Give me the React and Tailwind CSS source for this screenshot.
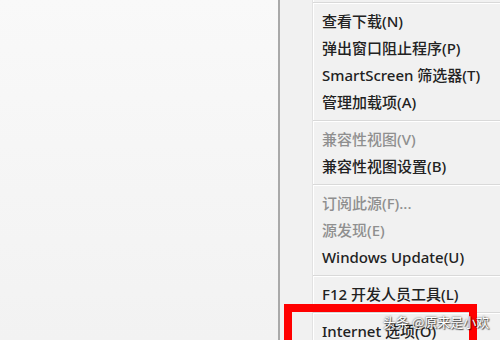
import React from "react";

const items = [
  { type: "sep", top: true },
  { label: "查看下载(N)" },
  { label: "弹出窗口阻止程序(P)" },
  { label: "SmartScreen 筛选器(T)" },
  { label: "管理加载项(A)" },
  { type: "sep" },
  { label: "兼容性视图(V)", disabled: true },
  { label: "兼容性视图设置(B)" },
  { type: "sep" },
  { label: "订阅此源(F)...", disabled: true },
  { label: "源发现(E)", disabled: true },
  { label: "Windows Update(U)" },
  { type: "sep" },
  { label: "F12 开发人员工具(L)" },
  { type: "sep" },
  { label: "Internet 选项(O)" },
];

const MenuRow = ({ item }) => {
  if (item.type === "sep") {
    return (
      <div className={`flex ${item.top ? "h-[8px] pt-[2px]" : "h-[10px] pt-[4px]"}`}>
        <div className="w-[33px] shrink-0" />
        <div className="flex-1 flex flex-col">
          <div className="h-px bg-[#d9d9d9]" />
          <div className="h-px bg-white" />
        </div>
      </div>
    );
  }
  return (
    <div className="flex h-[27px] items-center">
      <div className="w-[33px] shrink-0" />
      <span
        className={`pl-[9px] text-[15px] font-medium whitespace-nowrap leading-none ${
          item.disabled ? "text-[#8f8f8f]" : "text-[#222222]"
        }`}
      >
        {item.label}
      </span>
    </div>
  );
};

export default function App() {
  return (
    <div
      className="relative flex w-[500px] h-[340px] overflow-hidden"
      style={{ fontFamily: '"Noto Sans", "Noto Sans CJK SC", sans-serif' }}
    >
      {/* Page area */}
      <div className="w-[278px] h-full bg-gradient-to-b from-[#f9f9f9] to-[#f2f2f2]" />
      <div className="w-[2px] h-full bg-[#a9a9a9]" />

      {/* Context menu */}
      <div className="relative flex-1 h-full bg-[#f1f1f1]">
        <div className="absolute left-[32px] top-0 bottom-0 w-px bg-[#e2e2e2]" />
        <div className="absolute left-[33px] top-0 bottom-0 w-px bg-white" />
        <div className="relative flex flex-col">
          {items.map((item, i) => (
            <MenuRow key={i} item={item} />
          ))}
        </div>
      </div>

      {/* Red highlight */}
      <div className="absolute left-[284px] top-[304px] w-[193px] h-[60px] border-[8px] border-[#ff0000]" />

      {/* Watermark */}
      <div
        className="absolute left-[383px] top-[315px] text-[13px] text-white whitespace-nowrap leading-none"
        style={{
          fontFamily: '"Noto Sans CJK SC", sans-serif',
          textShadow: "0 0 2px rgba(0,0,0,0.8), 1px 1px 1px rgba(0,0,0,0.6)",
        }}
      >
        头条 @原来是小欢
      </div>
    </div>
  );
}
